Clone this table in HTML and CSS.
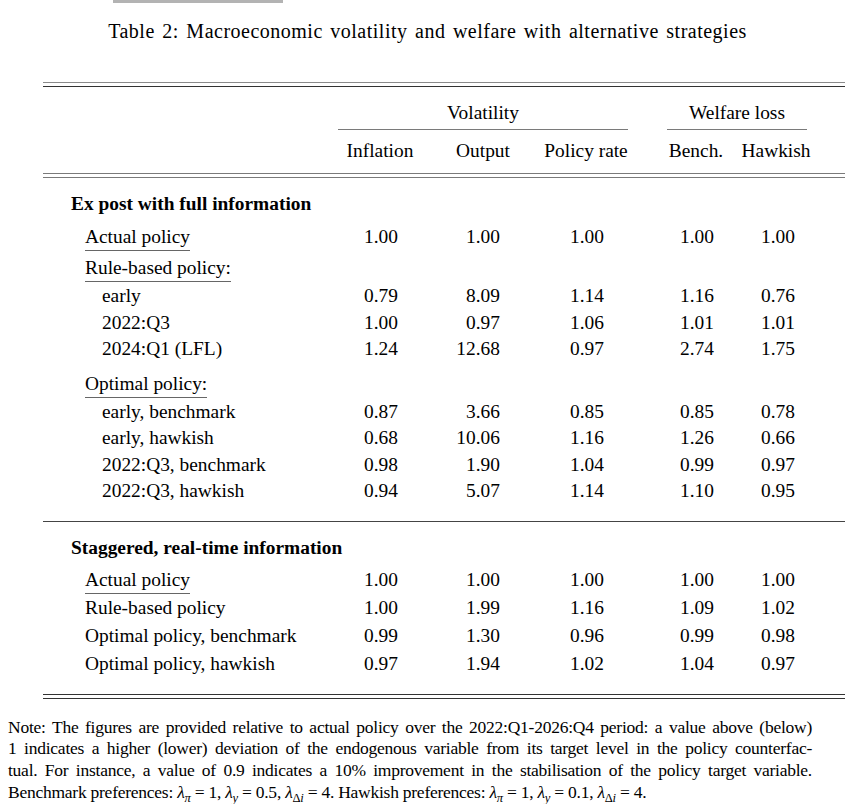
FILE: index.html
```html
<!DOCTYPE html>
<html lang="en">
<head>
<meta charset="utf-8">
<title>Table 2</title>
<link rel="stylesheet" href="styles.css">
</head>
<body>
<div class="topbar"></div>
<h1 class="caption">Table 2: Macroeconomic volatility and welfare with alternative strategies</h1>

<div class="table">
  <div class="rule-double top"></div>

  <div class="row spanners">
    <div class="span vol">Volatility</div>
    <div class="span wel">Welfare loss</div>
  </div>
  <div class="row heads">
    <div></div>
    <div class="h">Inflation</div>
    <div class="h">Output</div>
    <div class="h">Policy rate</div>
    <div class="h">Bench.</div>
    <div class="h">Hawkish</div>
  </div>

  <div class="rule-double mid"></div>

  <div class="section">Ex post with full information</div>

  <div class="row data ul first">
    <div class="lab l1"><span class="uline">Actual policy</span></div>
    <div>1.00</div><div>1.00</div><div>1.00</div><div>1.00</div><div>1.00</div>
  </div>
  <div class="row data ul">
    <div class="lab l1"><span class="uline">Rule-based policy:</span></div>
  </div>
  <div class="row data sub">
    <div class="lab l2">early</div>
    <div>0.79</div><div>8.09</div><div>1.14</div><div>1.16</div><div>0.76</div>
  </div>
  <div class="row data sub">
    <div class="lab l2">2022:Q3</div>
    <div>1.00</div><div>0.97</div><div>1.06</div><div>1.01</div><div>1.01</div>
  </div>
  <div class="row data sub">
    <div class="lab l2">2024:Q1 (LFL)</div>
    <div>1.24</div><div>12.68</div><div>0.97</div><div>2.74</div><div>1.75</div>
  </div>
  <div class="row data ul optimal">
    <div class="lab l1"><span class="uline">Optimal policy:</span></div>
  </div>
  <div class="row data sub">
    <div class="lab l2">early, benchmark</div>
    <div>0.87</div><div>3.66</div><div>0.85</div><div>0.85</div><div>0.78</div>
  </div>
  <div class="row data sub">
    <div class="lab l2">early, hawkish</div>
    <div>0.68</div><div>10.06</div><div>1.16</div><div>1.26</div><div>0.66</div>
  </div>
  <div class="row data sub">
    <div class="lab l2">2022:Q3, benchmark</div>
    <div>0.98</div><div>1.90</div><div>1.04</div><div>0.99</div><div>0.97</div>
  </div>
  <div class="row data sub">
    <div class="lab l2">2022:Q3, hawkish</div>
    <div>0.94</div><div>5.07</div><div>1.14</div><div>1.10</div><div>0.95</div>
  </div>

  <div class="rule-single"></div>

  <div class="section second">Staggered, real-time information</div>

  <div class="row data stag first">
    <div class="lab l1"><span class="uline">Actual policy</span></div>
    <div>1.00</div><div>1.00</div><div>1.00</div><div>1.00</div><div>1.00</div>
  </div>
  <div class="row data stag">
    <div class="lab l1">Rule-based policy</div>
    <div>1.00</div><div>1.99</div><div>1.16</div><div>1.09</div><div>1.02</div>
  </div>
  <div class="row data stag">
    <div class="lab l1">Optimal policy, benchmark</div>
    <div>0.99</div><div>1.30</div><div>0.96</div><div>0.99</div><div>0.98</div>
  </div>
  <div class="row data stag">
    <div class="lab l1">Optimal policy, hawkish</div>
    <div>0.97</div><div>1.94</div><div>1.02</div><div>1.04</div><div>0.97</div>
  </div>

  <div class="rule-double bottom"></div>
</div>

<div class="note">
  <span class="ln j">Note: The figures are provided relative to actual policy over the 2022:Q1-2026:Q4 period: a value above (below)</span>
  <span class="ln j">1 indicates a higher (lower) deviation of the endogenous variable from its target level in the policy counterfac-</span>
  <span class="ln j">tual. For instance, a value of 0.9 indicates a 10% improvement in the stabilisation of the policy target variable.</span>
  <span class="ln">Benchmark preferences: <span class="m"><i>λ</i><sub><i>π</i></sub> = 1</span>, <span class="m"><i>λ</i><sub><i>y</i></sub> = 0.5</span>, <span class="m"><i>λ</i><sub>Δ<i>i</i></sub> = 4</span>. Hawkish preferences: <span class="m"><i>λ</i><sub><i>π</i></sub> = 1</span>, <span class="m"><i>λ</i><sub><i>y</i></sub> = 0.1</span>, <span class="m"><i>λ</i><sub>Δ<i>i</i></sub> = 4</span>.</span>
</div>
</body>
</html>
```

FILE: styles.css
```css
html, body {
  margin: 0;
  padding: 0;
  background: #ffffff;
}

body {
  font-family: "Liberation Serif", "Times New Roman", serif;
  color: #000;
  font-size: 19.4px;
}

.topbar {
  margin-left: 113px;
  width: 170px;
  height: 3px;
  background: #b3b3b3;
}

.caption {
  margin: 16px 0 0;
  font-size: 20px;
  font-weight: normal;
  line-height: 24px;
  text-align: center;
  letter-spacing: 0.5px;
  word-spacing: 2px;
}

.table {
  margin: 39px 0 0 43px;
  width: 802px;
}

/* rules */
.rule-double {
  height: 3px;
  border-top: 1px solid #333;
  border-bottom: 1px solid #333;
}
.rule-double.top { border-top-color: #8a8a8a; }
.rule-double.mid {
  margin-top: 10px;
  border-top-color: #7a7a7a;
  border-bottom-color: #7a7a7a;
}
.rule-double.bottom { margin-top: 16px; }

.rule-single {
  margin-top: 16px;
  height: 0;
  border-top: 1px solid #444;
}

/* grid rows */
.row {
  display: grid;
  grid-template-columns: 295px 84px 122px 84px 28px 80px 80px;
}

.spanners {
  margin-top: 14px;
}
.span {
  line-height: 24px;
  padding-bottom: 4px;
  border-bottom: 1px solid #7a7a7a;
  text-align: center;
}
.span.vol { grid-column: 2 / 5; }
.span.wel { grid-column: 6 / 8; margin: 0 9px 0 11px; }

.heads {
  margin-top: 9px;
  line-height: 24px;
}
.heads .h { text-align: center; }
.heads .h:nth-child(5) { grid-column: 6; }

/* sections */
.section {
  margin-top: 14px;
  padding-left: 28px;
  line-height: 24px;
  font-weight: bold;
}
.section.second { margin-top: 14px; }

/* data rows */
.data > div { text-align: right; }
.data > .lab { text-align: left; }
.data > div:nth-child(2) { padding-right: 24px; }
.data > div:nth-child(3) { padding-right: 44px; }
.data > div:nth-child(4) { padding-right: 24px; }
.data > div:nth-child(5) { grid-column: 6; padding-right: 22px; }
.data > div:nth-child(6) { padding-right: 21px; }

.lab.l1 { padding-left: 42px; }
.lab.l2 { padding-left: 59px; }

.ul { line-height: 31px; }
.ul.first { margin-top: 5px; }
.ul.optimal { margin-top: 5px; }
.sub { line-height: 26.5px; }
.stag { line-height: 28px; }
.stag.first { margin-top: 6px; }

.uline {
  display: inline-block;
  line-height: 20px;
  padding-bottom: 3px;
  border-bottom: 1px solid #666;
}

/* note */
.note {
  margin: 18px 0 0 8px;
  width: 804px;
  font-size: 17.5px;
  line-height: 21.8px;
  letter-spacing: -0.25px;
}
.ln {
  display: block;
  white-space: nowrap;
}
.ln.j {
  text-align: justify;
  text-align-last: justify;
}
.m sub {
  font-size: 0.72em;
  line-height: 0;
  vertical-align: -0.3em;
}
```
